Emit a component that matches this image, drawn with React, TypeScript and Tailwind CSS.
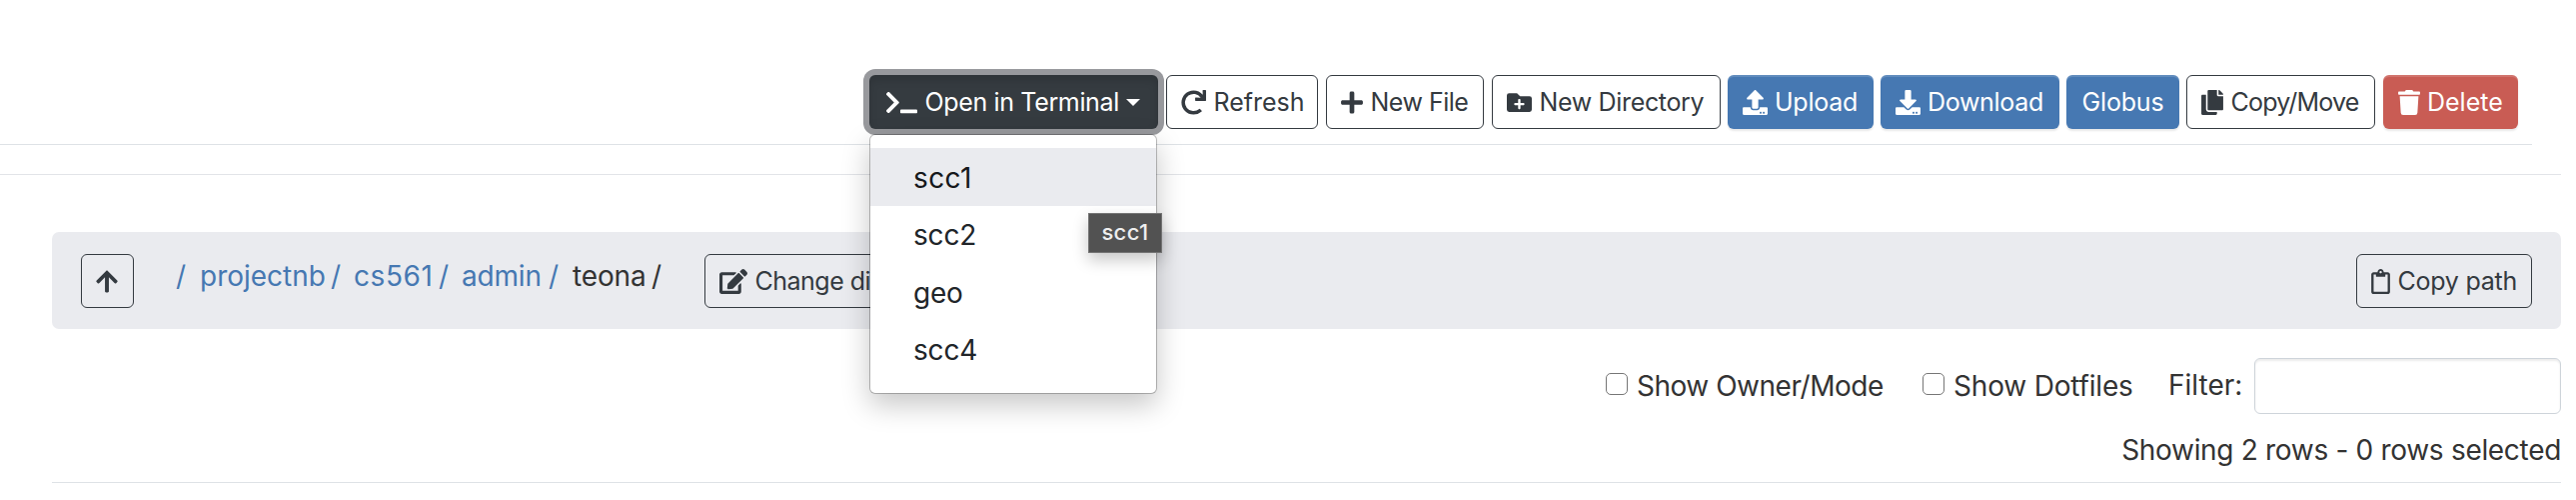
import type { ReactNode } from "react";
import {
  FaArrowUp,
  FaCopy,
  FaDownload,
  FaEdit,
  FaFolderPlus,
  FaPlus,
  FaRedo,
  FaRegClipboard,
  FaTerminal,
  FaTrash,
  FaUpload,
} from "react-icons/fa";

const variants = {
  outline: "gap-[7.5px] border border-[#343a40] text-[#343a40] pl-[14px]",
  primary:
    "gap-[7px] bg-[#4678b2] pl-[15px] text-white shadow-[inset_0_2px_0_rgba(255,255,255,0.15),0_2px_2px_rgba(0,0,0,0.09)]",
  danger:
    "gap-[7px] bg-[#c95c54] pl-[15px] text-white shadow-[inset_0_2px_0_rgba(255,255,255,0.15),0_2px_2px_rgba(0,0,0,0.09)]",
};

function Button({
  variant = "outline",
  className,
  icon,
  children,
}: {
  variant?: keyof typeof variants;
  className: string;
  icon?: ReactNode;
  children?: ReactNode;
}) {
  return (
    <button
      className={`flex h-[54px] shrink-0 items-center overflow-hidden rounded-[6px] text-[25px] leading-none whitespace-nowrap ${variants[variant]} ${className}`}
    >
      {icon}
      {children}
    </button>
  );
}

const hosts = [
  { name: "scc1", className: "bg-[#eaebef] text-[#16181b] tracking-[0.4px]" },
  { name: "scc2", className: "text-[#212529] tracking-[-0.2px]" },
  { name: "geo", className: "text-[#212529] tracking-[-0.2px]" },
  { name: "scc4", className: "text-[#212529] tracking-[-0.2px]" },
];

function TerminalMenu() {
  return (
    <div className="relative z-10">
      <button className="flex h-[54px] w-[289px] items-center rounded-[6px] bg-[#353b40] pl-[17px] text-[25px] leading-none tracking-[-0.35px] whitespace-nowrap text-white shadow-[0_0_0_6px_#98999d,inset_0_5px_9px_rgba(0,0,0,0.13)]">
        <FaTerminal className="h-[25px] w-[31px]" />
        <span className="ml-[7.5px]">Open in Terminal</span>
        <svg className="ml-[7px] h-[7px] w-[14px]" viewBox="0 0 14 7" fill="currentColor">
          <path d="M0 0h14L7 7z" />
        </svg>
      </button>
      <ul className="absolute top-[59px] left-0 h-[260px] w-[288px] rounded-[6px] border border-black/25 bg-white bg-clip-padding pt-[13px] text-[28px] leading-none shadow-[0_11px_28px_rgba(0,0,0,0.22)]">
        {hosts.map((host) => (
          <li key={host.name} className={`flex h-[57.5px] items-center pt-[2px] pl-[43px] ${host.className}`}>
            {host.name}
          </li>
        ))}
      </ul>
      <div className="absolute top-[138px] left-[219px] flex h-[40px] w-[74px] items-center justify-center border border-[#747474] bg-[#525252] pb-[2px] text-[22px] leading-none font-medium tracking-[0.4px] text-[#eeeeee] shadow-[0_7px_16px_rgba(0,0,0,0.22)]">
        scc1
      </div>
    </div>
  );
}

const crumbs = [
  { name: "projectnb", className: "w-[154px]", label: "w-[131px]" },
  { name: "cs561", className: "w-[108px] tracking-[0.6px]", label: "w-[85px]" },
  { name: "admin", className: "w-[110px] tracking-[-0.2px]", label: "w-[87px]" },
];

export default function App() {
  return (
    <div className="h-[500px] w-[2578px] overflow-hidden bg-white font-[Inter,sans-serif] text-[28px] leading-none text-[#333333]">
      <header className="flex h-[145px] w-[2534px] border-b border-[#dee2e6] pt-[75px] pl-[870px]">
        <TerminalMenu />
        <Button className="ml-[8px] w-[152px]" icon={<FaRedo />}>
          <span>Refresh</span>
        </Button>
        <Button className="ml-[8px] w-[158px] tracking-[-0.5px]" icon={<FaPlus className="w-[22px]" />}>
          <span>New File</span>
        </Button>
        <Button className="ml-[8px] w-[229px] tracking-[-0.34px]" icon={<FaFolderPlus />}>
          <span>New Directory</span>
        </Button>
        <Button variant="primary" className="ml-[7px] w-[146px] tracking-[-0.25px]" icon={<FaUpload />}>
          <span>Upload</span>
        </Button>
        <Button variant="primary" className="ml-[7px] w-[179px] tracking-[-0.31px]" icon={<FaDownload />}>
          <span>Download</span>
        </Button>
        <Button variant="primary" className="ml-[7px] w-[113px] tracking-[-0.16px]">
          <span className="pl-[0.5px]">Globus</span>
        </Button>
        <Button className="ml-[7px] w-[189px] tracking-[-0.75px]" icon={<FaCopy className="w-[22px]" />}>
          <span>Copy/Move</span>
        </Button>
        <Button variant="danger" className="ml-[8px] w-[135px]" icon={<FaTrash className="w-[22px]" />}>
          <span>Delete</span>
        </Button>
      </header>
      <div className="h-[30px] w-[2563px] border-b border-[#e2e4e8]" />

      <main className="mt-[57px] ml-[52px] w-[2511px]">
        <nav className="flex h-[97px] items-start rounded-[7px] bg-[#eaebef] pt-[22px] pl-[29px]">
          <Button className="w-[53px]" icon={<FaArrowUp className="w-[22px]" />} />
          <ol className="ml-[42px] flex h-[43px] shrink-0 items-center whitespace-nowrap text-[#4678b2]">
            <li className="w-[24px]">/</li>
            {crumbs.map((crumb) => (
              <li key={crumb.name} className={`flex ${crumb.className}`}>
                <span className={crumb.label}>{crumb.name}</span>
                <span>/</span>
              </li>
            ))}
            <li className="flex w-[133px] tracking-[-0.14px] text-[#333333]">
              <span className="w-[80px] pl-px">teona</span>
              <span>/</span>
            </li>
          </ol>
          <Button className="w-[240px]" icon={<FaEdit className="h-[25px] w-[28px] shrink-0" />}>
            <span className="tracking-[-0.5px]">Change di</span>
          </Button>
          <Button
            className="mr-[29px] ml-auto w-[176px] tracking-[-0.24px]"
            icon={<FaRegClipboard className="w-[19px]" />}
          >
            <span>Copy path</span>
          </Button>
        </nav>

        <form className="mt-[29px] flex h-[56px] items-start justify-end whitespace-nowrap">
          <label className="flex h-[55px] w-[317px] items-center tracking-[-0.48px]">
            <input
              type="checkbox"
              className="mr-[9px] mb-[4px] size-[22px] appearance-none rounded-[5px] border-[1.5px] border-[#767676] bg-white"
            />
            Show Owner/Mode
          </label>
          <label className="flex h-[55px] w-[246px] items-center tracking-[-0.19px]">
            <input
              type="checkbox"
              className="mr-[9px] mb-[4px] size-[22px] appearance-none rounded-[5px] border-[1.5px] border-[#767676] bg-white"
            />
            Show Dotfiles
          </label>
          <label className="flex items-start">
            <span className="flex h-[53px] w-[86px] items-center">Filter:</span>
            <input
              type="text"
              className="h-[56px] w-[307px] rounded-[6px] border border-[#ced4da] bg-white px-3 shadow-[inset_0_2px_2px_rgba(0,0,0,0.075)]"
            />
          </label>
        </form>

        <p className="flex h-[69px] items-center justify-end border-b border-[#dee2e6] pt-[3px] tracking-[-0.31px]">
          Showing 2 rows - 0 rows selected
        </p>
      </main>
    </div>
  );
}
